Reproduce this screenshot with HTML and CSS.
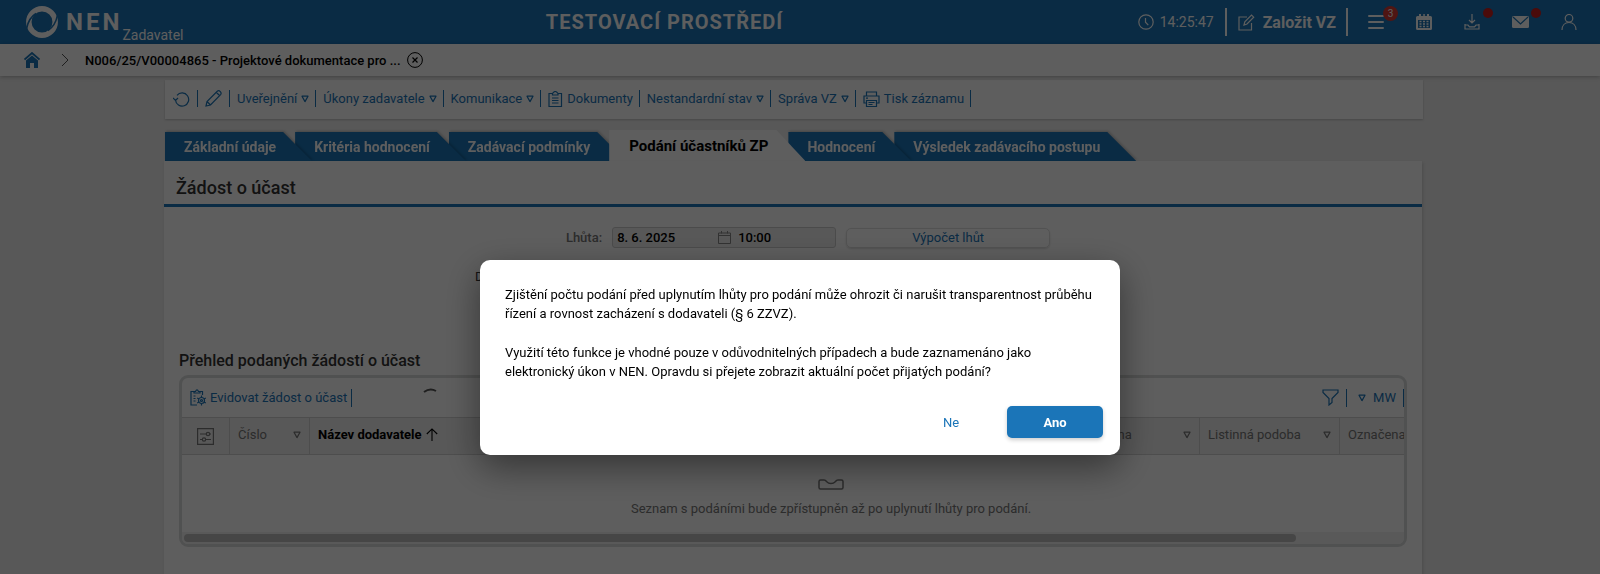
FILE: index.html
```html
<!DOCTYPE html>
<html lang="cs">
<head>
<meta charset="utf-8">
<title>NEN – Podání účastníků ZP</title>
<link rel="stylesheet" href="styles.css">
</head>
<body>
<svg class="defs" aria-hidden="true">
  <symbol id="tri" viewBox="0 0 8 8"><path d="M1 1.2h6L4 6.6z" fill="none" stroke="currentColor" stroke-width="1.2" stroke-linejoin="round"/></symbol>
</svg>
<header class="topbar">
  <div class="brand">
    <svg class="brand-mark" viewBox="0 0 32 32"><circle cx="16" cy="16" r="13.200" fill="none" stroke="currentColor" stroke-width="5.500"/><path d="M.5 23Q2.500 12 10 7.500M31.500 9Q29.500 20 22 24.500" fill="none" stroke="#1b75b8" stroke-width="1.500"/></svg>
    <span class="brand-name">NEN</span>
    <span class="brand-role">Zadavatel</span>
  </div>
  <div class="env">TESTOVACÍ PROSTŘEDÍ</div>
  <div class="tools">
    <div class="clock">
      <svg width="16" height="16" viewBox="0 0 16 16" class="ln"><circle cx="8" cy="8" r="7.200"/><path d="M7.500 4v4.200l2.800 3"/></svg>
      <span>14:25:47</span>
    </div>
    <button class="create">
      <svg width="17" height="17" viewBox="0 0 17 17" class="ln"><path d="M9 3H1v13h12.500V9M6 11l.8-3.200L13.500 1l2.200 2.200L9 10z"/></svg>
      <span>Založit VZ</span>
    </button>
    <nav class="icons">
      <button class="ib" aria-label="Menu"><svg width="16" height="16" viewBox="0 0 16 16"><path d="M1 2h14M1 8h14M1 14h14" stroke="currentColor" stroke-width="2" stroke-linecap="round"/></svg><span class="badge">3</span></button>
      <button class="ib" aria-label="Kalendář"><svg width="16" height="16" viewBox="0 0 16 16"><path fill="currentColor" fill-rule="evenodd" d="M0 3.500Q0 2 1.500 2H3V0h2v2h2.300V0h1.500v2H11V0h2v2h1.500Q16 2 16 3.500v11q0 1.500-1.500 1.500h-13Q0 16 0 14.500zM2 6v8h12V6z"/><path d="M3.500 7.500h9M3.500 10h9M3.500 12.500h9" stroke="currentColor" stroke-width="1.500" stroke-dasharray="2 1.500"/></svg></button>
      <button class="ib" aria-label="Stažené"><svg width="16" height="16" viewBox="0 0 16 16" class="ln"><path d="M8 0v9M5 6l3 3 3-3M1 10v5h14v-5M1 11h3l1.500 1.800h5L12 11h3"/></svg><span class="badge dot"></span></button>
      <button class="ib" aria-label="Zprávy"><svg width="17" height="16" viewBox="0 0 17 16"><rect y="2" width="17" height="12" rx="1.500" fill="currentColor"/><path d="M1 3l7.500 7L16 3" fill="none" stroke="#1b75b8" stroke-width="1.200"/></svg><span class="badge dot"></span></button>
      <button class="ib" aria-label="Uživatel"><svg width="16" height="16" viewBox="0 0 16 16" class="ln"><circle cx="8" cy="4.300" r="3.800"/><path d="M1 16c0-4.500 2.800-7.500 7-7.500s7 3 7 7.500"/></svg></button>
    </nav>
  </div>
</header>
<nav class="crumbs">
  <a href="#" class="home" aria-label="Domů"><svg width="16" height="16" viewBox="0 0 16 16"><path d="M.5 7.500L8 1l7.500 6.500" fill="none" stroke="currentColor" stroke-width="1.800"/><path fill="currentColor" d="M2 8.500L8 3.500l6 5V16h-4v-5H6v5H2z"/></svg></a>
  <svg class="chev" width="8" height="14" viewBox="0 0 8 14"><path d="M1 1l6 6-6 6" fill="none" stroke="currentColor"/></svg>
  <span class="crumb">N006/25/V00004865 - Projektové dokumentace pro ...</span>
  <button class="close" aria-label="Zavřít"><svg width="16" height="16" viewBox="0 0 16 16"><circle cx="8" cy="8" r="7.400" fill="none" stroke="currentColor"/><path d="M5.500 5.500l5 5M10.500 5.500l-5 5" stroke="currentColor" stroke-width="1.200"/></svg></button>
</nav>
<main class="page">
  <div class="actions">
    <button aria-label="Obnovit"><svg width="17" height="16" viewBox="0 0 17 16" class="ln"><path d="M2.500 9A6.600 6.600 0 1 0 4 4.300M0 7l2.500 2.500L5 7"/></svg></button>
    <button aria-label="Upravit"><svg width="17" height="17" viewBox="0 0 17 17" class="ln"><path d="M1 16l1-4.500L12.500 1q1.500-.8 2.800.6t.5 2.700L5.500 15zM2 11.500L5.500 15M11.500 2.500L14.500 5.500"/></svg></button>
    <button>Uveřejnění<svg class="tri"><use href="#tri"/></svg></button>
    <button>Úkony zadavatele<svg class="tri"><use href="#tri"/></svg></button>
    <button>Komunikace<svg class="tri"><use href="#tri"/></svg></button>
    <button><svg class="lead" width="15" height="16" viewBox="0 0 15 16"><path class="ln" d="M4.500 2.500H1v13h12.500v-13H10M4.500 4V2.500Q7.200-1.500 10 2.500V4zM4 7h6.500M4 9.500h6.500M4 12h6.500"/></svg>Dokumenty</button>
    <button>Nestandardní stav<svg class="tri"><use href="#tri"/></svg></button>
    <button>Správa VZ<svg class="tri"><use href="#tri"/></svg></button>
    <button><svg class="lead" width="17" height="16" viewBox="0 0 17 16"><path class="ln" d="M3.500 5V1h10v4M3.500 12H1V5h15v7h-2.500M3.500 9.500h10v6h-10zM5.500 11.500h6M5.500 13.500h4M3 7.200h2"/></svg>Tisk záznamu</button>
  </div>
  <div class="tabs" role="tablist">
    <button role="tab" class="tab t1">Základní údaje</button>
    <button role="tab" class="tab t2">Kritéria hodnocení</button>
    <button role="tab" class="tab t3">Zadávací podmínky</button>
    <button role="tab" class="tab active" aria-selected="true">Podání účastníků ZP</button>
    <button role="tab" class="tab t5">Hodnocení</button>
    <button role="tab" class="tab t6">Výsledek zadávacího postupu</button>
  </div>
  <section class="panel">
    <h1>Žádost o účast</h1>
    <div class="form">
      <label for="date">Lhůta:</label>
      <div class="field">
        <input id="date" class="date" value="8. 6. 2025">
        <svg width="13" height="13" viewBox="0 0 13 13"><path d="M.5 2h12v10.500H.5zM.5 4.500h12M3.500 0v2.500M9.500 0v2.500" fill="none" stroke="currentColor"/></svg>
        <input class="time" value="10:00" aria-label="Čas">
      </div>
      <button class="calc">Výpočet lhůt</button>
    </div>
    <div class="received">Dosud přijato</div>
    <h2>Přehled podaných žádostí o účast</h2>
    <div class="gridbox">
      <div class="gridbar">
        <button class="reg"><svg class="lead" width="17" height="17" viewBox="0 0 17 17"><path class="ln" d="M4 2.500H1v13.500h6M4 4V2.500h1.500Q7 -.8 8.500 2.500H10V4zM10 2.500h2.500V6M3.500 7h2M3.500 9.500h2M3.500 12h2"/><path class="ln" d="M11.500 6.500v2M11.500 14.500v2M7.200 9l1.800 1M14 13l1.800 1M7.200 14l1.800-1M14 10l1.800-1"/><circle class="ln" cx="11.500" cy="11.500" r="3"/><circle class="ln" cx="11.500" cy="11.500" r="1"/></svg>Evidovat žádost o účast</button>
        <svg class="spin" width="16" height="16" viewBox="0 0 16 16"><path d="M2 4Q8-.5 14 3" fill="none" stroke="currentColor" stroke-width="2"/></svg>
        <div class="gridtools">
          <button class="flt" aria-label="Filtr"><svg width="17" height="17" viewBox="0 0 17 17"><path class="ln" d="M1 1h15v2.500L10 9.500v4L7 16V9.500L1 3.500z"/></svg></button>
          <button class="mw"><svg class="tri"><use href="#tri"/></svg>MW</button>
        </div>
      </div>
      <div class="scroller">
      <table>
        <colgroup><col class="c1"><col class="c2"><col><col class="c4"><col class="c5"><col class="c6"></colgroup>
        <thead><tr>
          <th class="set"><svg width="17" height="17" viewBox="0 0 17 17"><path class="ln" d="M.6.6h15.800v15.800H.6zM3 6h6M13 6h1M3 11.500h2M9 11.500h5"/><circle class="ln" cx="11" cy="6" r="1.700"/><circle class="ln" cx="7" cy="11.500" r="1.700"/></svg></th>
          <th><div>Číslo<svg class="tri"><use href="#tri"/></svg></div></th>
          <th class="sorted">Název dodavatele<svg class="up" width="12" height="13" viewBox="0 0 12 13"><path d="M6 13V1M.8 6L6 .9 11.200 6" fill="none" stroke="currentColor" stroke-width="1.100"/></svg></th>
          <th><div>Otevřena<svg class="tri"><use href="#tri"/></svg></div></th>
          <th><div>Listinná podoba<svg class="tri"><use href="#tri"/></svg></div></th>
          <th>Označena</th>
        </tr></thead>
        <tbody><tr><td colspan="6">
          <svg width="26" height="11" viewBox="0 0 26 11"><path d="M2.500 1H6q1.500 0 2.500 1.500Q10.500 4.600 13 4.600t4.500-2.100Q18.500 1 20 1h3.500Q25 1 25 2.500v6q0 1.500-1.500 1.500h-21Q1 10 1 8.500v-6Q1 1 2.500 1z" fill="none" stroke="currentColor" stroke-width="1.500"/></svg>
          <p>Seznam s podáními bude zpřístupněn až po uplynutí lhůty pro podání.</p>
        </td></tr></tbody>
      </table>
      </div>
      <div class="track"><div class="thumb"></div></div>
    </div>
  </section>
</main>
<div class="overlay">
  <div class="dialog" role="dialog" aria-modal="true">
    <p>Zjištění počtu podání před uplynutím lhůty pro podání může ohrozit či narušit transparentnost průběhu řízení a rovnost zacházení s dodavateli (§ 6 ZZVZ).</p>
    <p>Využití této funkce je vhodné pouze v odůvodnitelných případech a bude zaznamenáno jako<br>elektronický úkon v NEN. Opravdu si přejete zobrazit aktuální počet přijatých podání?</p>
    <div class="buttons"><button class="no">Ne</button><button class="yes">Ano</button></div>
  </div>
</div>
</body>
</html>
```
FILE: styles.css
```css
* { box-sizing: border-box; }
html, body { height: 100%; }
body {
  margin: 0;
  overflow: hidden;
  display: flex;
  flex-direction: column;
  background: #eeeeee;
  color: #000;
  font-family: Roboto, "Liberation Sans", sans-serif;
  font-size: 13px;
}
button, input {
  font: inherit;
  color: inherit;
  border: 0;
  padding: 0;
  background: none;
}
svg { flex: none; display: block; }
h1, h2, p { margin: 0; }
.defs { position: absolute; width: 0; height: 0; }
.ln { fill: none; stroke: currentColor; stroke-width: 1.2; }
.tri { width: 8px; height: 8px; }

/* top bar */
.topbar {
  flex: none;
  display: grid;
  grid-template-columns: 1fr auto 1fr;
  height: 44px;
  padding: 0 23px 0 26px;
  background: #1b75b8;
  color: #fff;
}
.brand { display: flex; align-items: center; }
.brand-mark { width: 32px; height: 32px; }
.brand-name { margin-left: 8px; font-size: 24px; font-weight: 700; letter-spacing: 3px; }
.brand-role { align-self: flex-end; font-size: 14px; line-height: 18px; }
.env { align-self: center; padding-right: 274px; font-size: 20px; font-weight: 700; letter-spacing: 1px; }
.tools { display: flex; align-items: center; justify-content: flex-end; }
.clock { display: flex; align-items: center; gap: 6px; font-size: 14px; }
.create {
  display: flex;
  align-items: center;
  gap: 8px;
  height: 28px;
  margin-left: 11px;
  padding: 0 10px 0 11px;
  border: solid #fff;
  border-width: 0 2px;
  font-size: 16px;
  font-weight: 700;
}
.icons { display: flex; gap: 32px; margin-left: 20px; }
.ib { position: relative; }
.badge {
  position: absolute;
  left: 15px;
  top: -8px;
  width: 15px;
  height: 15px;
  border-radius: 50%;
  background: #d63a34;
  font-size: 10px;
  line-height: 15px;
}
.dot { left: 19px; top: -6px; width: 10px; height: 10px; background: #c81e1e; }

/* breadcrumbs */
.crumbs {
  flex: none;
  position: relative;
  z-index: 1;
  display: flex;
  align-items: center;
  height: 32px;
  padding-left: 24px;
  background: #fff;
  box-shadow: 0 1px 4px rgba(0, 0, 0, .25);
}
.home { color: #1b75b8; }
.chev { margin: 0 16px 0 21px; color: #555; }
.crumb { font-weight: 500; }
.close { margin-left: 6px; }

/* page */
.page {
  flex: 1;
  display: flex;
  flex-direction: column;
  min-height: 0;
  margin: 4px 178px 0 164px;
}
.actions {
  flex: none;
  display: flex;
  align-items: center;
  height: 39px;
  margin: 0 -1px 0 1px;
  padding: 0 0 2px 1px;
  background: #fff;
  color: #1b75b8;
  box-shadow: 0 1px 2px rgba(0, 0, 0, .2);
}
.actions button {
  display: flex;
  align-items: center;
  height: 17px;
  padding: 0 6px 0 7px;
  border-right: 1px solid #1b75b8;
}
.actions button[aria-label] { padding: 0 7px; }
.actions .tri { margin-left: 4px; }
.lead { margin-right: 4px; }
.tabs {
  flex: none;
  display: flex;
  align-items: flex-end;
  height: 42px;
  padding-left: 1px;
}
.tab {
  position: relative;
  height: 29px;
  padding: 1px 19px 0;
  color: #fff;
  font-size: 14px;
  font-weight: 700;
  filter: drop-shadow(1px -1px 1px rgba(0, 0, 0, .2));
}
.tab::before {
  content: "";
  position: absolute;
  z-index: -1;
  inset: 0 -17px 0 0;
  background: #1b75b8;
  clip-path: polygon(0 0, calc(100% - 29px) 0, 100% 100%, 0 100%);
}
.t1, .t5 { z-index: 3; }
.t2, .t6 { z-index: 2; }
.t3 { z-index: 1; }
.tab.active { z-index: 4; height: 31px; padding: 0 20px; color: #000; font-size: 15px; filter: none; }
.active::before { background: #fff; }
.panel {
  flex: 1;
  position: relative;
  z-index: 5;
  background: #fff;
  box-shadow: 1px 2px 3px rgba(0, 0, 0, .15);
}
h1 {
  height: 46px;
  padding: 0 12px;
  border-bottom: 3px solid #1b75b8;
  color: #333;
  font-size: 18px;
  font-weight: 500;
  line-height: 54px;
}
.form {
  display: flex;
  align-items: center;
  justify-content: center;
  gap: 10px;
  padding: 20px 0 0 30px;
}
.form label { color: #777; font-weight: 500; }
.field {
  display: flex;
  align-items: center;
  width: 224px;
  height: 21px;
  padding: 0 4px;
  border: 1px solid #ccc;
  border-radius: 3px;
  background: #eee;
  color: #888;
  font-weight: 500;
}
.field input { color: #000; }
.date { width: 101px; }
.time { width: 80px; margin-left: 7px; }
.calc {
  width: 204px;
  height: 20px;
  border: 1px solid #ddd;
  border-radius: 5px;
  box-shadow: 0 1px 2px rgba(0, 0, 0, .15);
  color: #1b75b8;
}
.received { padding: 21px 0 0 311px; color: #333; line-height: 16px; }
h2 { padding: 65px 15px 0; color: #333; font-size: 16px; font-weight: 500; line-height: 22px; }
.gridbox {
  margin: 3px 15px 0;
  border: 3px solid #dadcdb;
  border-radius: 9px;
  overflow: hidden;
}
.gridbar { display: flex; align-items: center; height: 39px; color: #1b75b8; }
.reg, .mw, .flt { display: flex; align-items: center; height: 18px; padding: 0 7px 0 8px; border-right: 1px solid #1b75b8; }
.reg { padding-right: 4px; }
.reg .lead { margin-right: 3px; }
.spin { margin-left: 70px; color: #555; align-self: flex-start; margin-top: 10px; }
.gridtools { display: flex; margin-left: auto; }
.mw { gap: 7px; padding-left: 11px; }
.scroller { overflow: hidden; }
table { width: 1298px; table-layout: fixed; border-collapse: separate; border-spacing: 0; }
.c1 { width: 48px; }
.c2 { width: 80px; }
.c4 { width: 128px; }
.c5 { width: 140px; }
.c6 { width: 140px; }
th {
  height: 38px;
  padding: 0 8px 3px;
  border: solid #d2d2d2;
  border-width: 1px 1px 1px 0;
  background: #eee;
  color: #777;
  font-weight: 400;
  text-align: left;
  white-space: nowrap;
}
th div { display: flex; align-items: center; justify-content: space-between; }
.set { padding-bottom: 0; }
.set svg { margin: 0 auto; }
.sorted { color: #000; font-weight: 700; }
.up { display: inline-block; margin-left: 4px; vertical-align: -2px; }
td { height: 77px; padding: 24px 0 0; color: #777; text-align: center; vertical-align: top; }
td svg { margin: 0 auto; }
td p { margin-top: 11px; line-height: 16px; }
.track { height: 12px; padding: 2px; background: #f0f0f0; }
.thumb { width: calc(100% - 106px); height: 8px; border-radius: 4px; background: #bdbdbd; }

/* dialog */
.overlay {
  position: fixed;
  inset: 0;
  z-index: 10;
  display: flex;
  align-items: flex-start;
  justify-content: center;
  padding-top: 260px;
  background: rgba(0, 0, 0, .63);
}
.dialog {
  width: 640px;
  padding: 25px 17px 17px 25px;
  border-radius: 10px;
  background: #fff;
  box-shadow: 0 12px 36px rgba(0, 0, 0, .45);
  line-height: 19px;
}
.dialog p { margin-bottom: 20px; }
.buttons { display: flex; justify-content: flex-end; margin-top: 25px; }
.no, .yes { width: 96px; height: 32px; border-radius: 5px; }
.no { margin-right: 8px; color: #1b75b8; }
.yes { background: #1b75b8; color: #fff; font-weight: 700; box-shadow: 0 2px 4px rgba(0, 0, 0, .2); }
```
